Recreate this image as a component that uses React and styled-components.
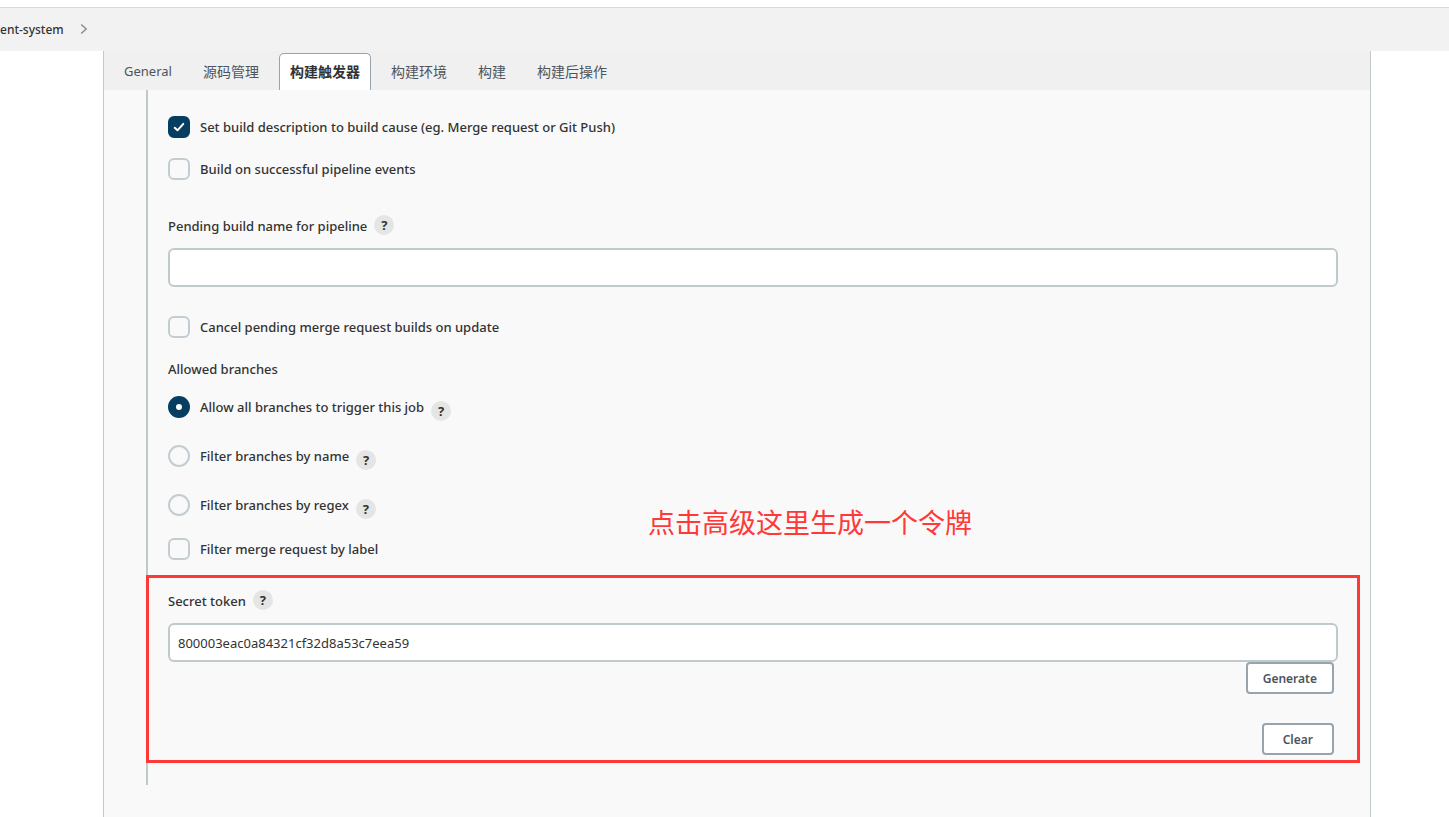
import React, { useState } from 'react'
import styled, { createGlobalStyle } from 'styled-components'

const tabs = ['General', '源码管理', '构建触发器', '构建环境', '构建', '构建后操作']

const branchFilters = [
    { value: 'all', label: 'Allow all branches to trigger this job' },
    { value: 'name', label: 'Filter branches by name' },
    { value: 'regex', label: 'Filter branches by regex' },
]

const CheckRow = ({ id, label, defaultChecked }) => (
    <OptionRow>
        <CheckBox>
            <input id={id} type="checkbox" defaultChecked={defaultChecked} />
            <svg viewBox="0 0 22 22" aria-hidden="true">
                <path d="M6.7 11.8 L9.5 14.3 L15.3 7.9" />
            </svg>
        </CheckBox>
        <OptionLabel htmlFor={id}>{label}</OptionLabel>
    </OptionRow>
)

const Help = ({ topic, low }) => (
    <HelpButton type="button" $low={low} aria-label={`Help for feature: ${topic}`}>?</HelpButton>
)

const App = () => {
    const [activeTab, setActiveTab] = useState('构建触发器')
    const [branchFilter, setBranchFilter] = useState('all')
    const [pendingName, setPendingName] = useState('')
    const [token, setToken] = useState('800003eac0a84321cf32d8a53c7eea59')

    return (
        <Page>
            <GlobalStyle />
            <Breadcrumb aria-label="breadcrumb">
                <a href="#!">ent-system</a>
                <svg viewBox="0 0 8 14" aria-hidden="true">
                    <path d="M1.2 1.5 L6.2 6 L1.2 10.5" />
                </svg>
            </Breadcrumb>
            <Panel>
                <TabBar role="tablist">
                    {tabs.map((tab) => (
                        <Tab
                            key={tab}
                            type="button"
                            role="tab"
                            aria-selected={tab === activeTab}
                            $active={tab === activeTab}
                            $latin={/^\w+$/.test(tab)}
                            onClick={() => setActiveTab(tab)}
                        >
                            {tab}
                        </Tab>
                    ))}
                </TabBar>
                <Section>
                    <CheckList>
                        <CheckRow id="setDescription" label="Set build description to build cause (eg. Merge request or Git Push)" defaultChecked />
                        <CheckRow id="pipelineEvents" label="Build on successful pipeline events" />
                    </CheckList>

                    <Field>
                        <FieldHead>
                            <label htmlFor="pendingName">Pending build name for pipeline</label>
                            <Help topic="Pending build name for pipeline" />
                        </FieldHead>
                        <TextInput id="pendingName" type="text" value={pendingName} onChange={(e) => setPendingName(e.target.value)} />
                    </Field>

                    <CheckRow id="cancelPending" label="Cancel pending merge request builds on update" />

                    <BranchGroup role="radiogroup" aria-labelledby="allowedBranches">
                        <GroupTitle id="allowedBranches">Allowed branches</GroupTitle>
                        {branchFilters.map(({ value, label }) => (
                            <RadioRow key={value}>
                                <Radio
                                    id={`branch-${value}`}
                                    type="radio"
                                    name="branchFilter"
                                    checked={branchFilter === value}
                                    onChange={() => setBranchFilter(value)}
                                />
                                <OptionLabel htmlFor={`branch-${value}`}>{label}</OptionLabel>
                                <Help topic={label} low />
                            </RadioRow>
                        ))}
                    </BranchGroup>

                    <CheckRow id="filterLabel" label="Filter merge request by label" />

                    <TokenBox>
                        <Note>点击高级这里生成一个令牌</Note>
                        <FieldHead>
                            <label htmlFor="secretToken">Secret token</label>
                            <Help topic="Secret token" />
                        </FieldHead>
                        <TextInput id="secretToken" type="text" value={token} onChange={(e) => setToken(e.target.value)} />
                        <Actions>
                            <ActionButton type="button">Generate</ActionButton>
                            <ActionButton type="button" onClick={() => setToken('')}>Clear</ActionButton>
                        </Actions>
                    </TokenBox>
                </Section>
            </Panel>
        </Page>
    )
}

const GlobalStyle = createGlobalStyle`
    *, *::before, *::after{
        box-sizing: border-box;
    }
    body{
        margin: 0;
        background: #fff;
        color: #333;
        font-family: "Noto Sans", "Noto Sans CJK SC", sans-serif;
        font-size: 13px;
        line-height: 22px;
    }
    button, input{
        margin: 0;
        font-family: inherit;
    }
`
const Page = styled.div`
    display: flex;
    flex-direction: column;
    min-height: 100vh;
    padding-top: 7px;
`
const Breadcrumb = styled.nav`
    display: flex;
    align-items: center;
    gap: 16px;
    height: 44px;
    border-top: 1px solid #d9dadb;
    background: #f2f2f2;
    a{
        color: #333;
        text-decoration: none;
        font-size: 12px;
        font-weight: 500;
    }
    svg{
        width: 8px;
        height: 14px;
        fill: none;
        stroke: #8c8c8c;
        stroke-width: 1.5;
    }
`
const Panel = styled.main`
    flex: 1;
    margin: 0 78px 0 103px;
    padding-bottom: 32px;
    border: solid #c0cacd;
    border-width: 0 1px;
    background: #f9f9f9;
`
const TabBar = styled.div`
    display: flex;
    align-items: flex-end;
    gap: 9px;
    height: 39px;
    padding-left: 9px;
    background: #f0f0f0;
`
const Tab = styled.button`
    height: 37px;
    padding: 0 10px 2px;
    border: 1px solid ${(p) => (p.$active ? '#98a4ad' : 'transparent')};
    border-bottom: 0;
    border-radius: 5px 5px 0 0;
    background: ${(p) => (p.$active ? '#fff' : 'transparent')};
    color: ${(p) => (p.$active ? '#333' : '#4d545d')};
    font-size: ${(p) => (p.$latin ? '13px' : '14px')};
    font-weight: ${(p) => (p.$active ? 700 : 400)};
    white-space: nowrap;
    cursor: pointer;
`
const Section = styled.section`
    margin-left: 42px;
    padding: 26px 32px 22px 20px;
    border-left: 2px solid #c0cacd;
`
const CheckList = styled.div`
    display: flex;
    flex-direction: column;
    gap: 20px;
`
const OptionRow = styled.div`
    display: flex;
    align-items: center;
    gap: 10px;
    height: 22px;
`
const OptionLabel = styled.label`
    font-weight: 500;
`
const CheckBox = styled.span`
    display: grid;
    width: 22px;
    height: 22px;
    input, svg{
        grid-area: 1 / 1;
        width: 22px;
        height: 22px;
    }
    input{
        appearance: none;
        border: 2px solid #c3cdd1;
        border-radius: 6px;
    }
    input:checked{
        border-color: #063e62;
        background: #063e62;
    }
    svg{
        fill: none;
        stroke: #fff;
        stroke-width: 2;
        stroke-linecap: round;
        stroke-linejoin: round;
        pointer-events: none;
        visibility: hidden;
    }
    input:checked + svg{
        visibility: visible;
    }
`
const Field = styled.div`
    margin: 35px 0 29px;
`
const FieldHead = styled.div`
    display: flex;
    align-items: flex-start;
    gap: 7px;
    height: 22px;
    margin-bottom: 11px;
    font-weight: 500;
`
const HelpButton = styled.button`
    flex: none;
    width: 20px;
    height: 20px;
    margin-top: ${(p) => (p.$low ? '5px' : '0')};
    padding: 0;
    border: 0;
    border-radius: 50%;
    background: #e5e5e5;
    color: #333;
    font-size: 13px;
    font-weight: 700;
    line-height: 20px;
    text-align: center;
    cursor: pointer;
`
const TextInput = styled.input`
    display: block;
    width: 100%;
    height: 39px;
    padding: 0 8px;
    border: 2px solid #c0cacd;
    border-radius: 6px;
    background: #fff;
    color: #333;
    font-size: 13px;
`
const BranchGroup = styled.div`
    display: flex;
    flex-direction: column;
    margin: 20px 0 19px;
`
const GroupTitle = styled.div`
    margin-bottom: 16px;
    font-weight: 500;
`
const RadioRow = styled.div`
    display: flex;
    align-items: flex-start;
    height: 25px;
    gap: 7px;
    & + &{
        margin-top: 24px;
    }
`
const Radio = styled.input`
    appearance: none;
    flex: none;
    width: 22px;
    height: 22px;
    && {
        margin-right: 3px;
    }
    border: 2px solid #c3cdd1;
    border-radius: 50%;
    &:checked{
        border: 8px solid #063e62;
        background: #fff;
    }
`
/* stretches over the section line on the left and past the inputs on the right */
const TokenBox = styled.div`
    position: relative;
    margin: 15px -22px 0;
    padding: 12px 19px 5px;
    border: 3px solid #ff3838;
`
const Note = styled.div`
    position: absolute;
    bottom: 100%;
    left: 499px;
    margin-bottom: 35px;
    color: #ff3838;
    font-size: 27px;
    line-height: 40px;
    white-space: nowrap;
`
const Actions = styled.div`
    display: flex;
    flex-direction: column;
    align-items: flex-end;
    gap: 29px;
    padding-right: 4px;
`
const ActionButton = styled.button`
    height: 32px;
    padding: 0 15px;
    border: 2px solid #98a4ad;
    border-radius: 4px;
    background: #fff;
    color: #4d545d;
    font-size: 12px;
    font-weight: 600;
    cursor: pointer;
    &:last-child{
        padding: 0 19px;
    }
`

export default App
